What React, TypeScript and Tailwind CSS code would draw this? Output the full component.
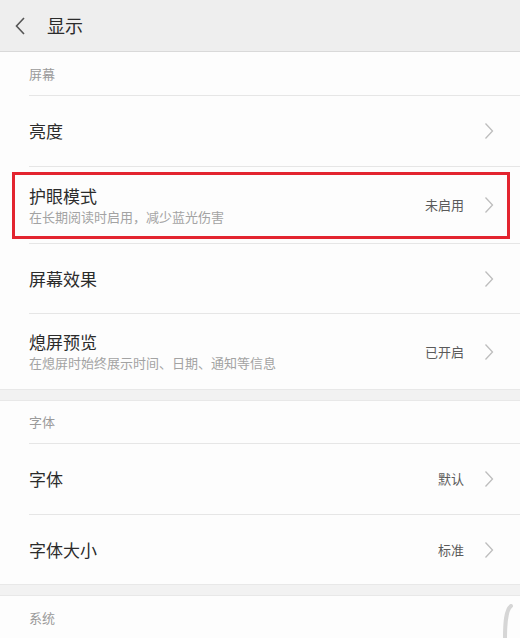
import { ReactNode } from "react";

const FONT = { fontFamily: '"Noto Sans CJK SC", "Noto Sans", sans-serif' };

function Chevron() {
  return (
    <svg width="10" height="18" viewBox="0 0 10 18" className="shrink-0">
      <path d="M1.5 1.5 L8.5 9 L1.5 16.5" fill="none" stroke="#bdbdbd" strokeWidth="1.3" />
    </svg>
  );
}

function SectionLabel({ children, first }: { children: ReactNode; first?: boolean }) {
  return (
    <div className={`flex items-center pl-[29px] ${first ? "h-[45px]" : "h-[44px]"}`}>
      <span className="text-[13px] text-[#9a9a9a]">{children}</span>
    </div>
  );
}

function Row({
  title,
  sub,
  value,
  h,
  last,
  highlight,
}: {
  title: string;
  sub?: string;
  value?: string;
  h: string;
  last?: boolean;
  highlight?: boolean;
}) {
  return (
    <div className="relative pl-[29px]">
      <div className={`flex items-center pr-[26px] ${h} ${last ? "" : "border-b border-[#e6e6e6]"}`}>
        <div className="flex-1 flex flex-col">
          <span className="text-[17px] leading-[22px] text-[#2b2b2b]">{title}</span>
          {sub && <span className="text-[13px] leading-[18px] mt-[1px] text-[#a3a3a3]">{sub}</span>}
        </div>
        {value && <span className="text-[13px] text-[#5a5a5a] mr-[20px]">{value}</span>}
        <Chevron />
      </div>
      {highlight && (
        <div className="absolute top-[5px] bottom-[5px] left-[12px] right-[10px] border-[3px] border-[#e3242f]" />
      )}
    </div>
  );
}

export default function App() {
  return (
    <div className="relative w-[520px] h-[638px] overflow-hidden bg-[#f2f2f2]" style={FONT}>
      {/* header */}
      <div className="h-[52px] flex items-center bg-[#eeeeee] border-b border-[#d9d9d9]">
        <svg width="12" height="20" viewBox="0 0 12 20" className="ml-[14px]">
          <path d="M10 2 L2.5 10 L10 18" fill="none" stroke="#555" strokeWidth="1.6" />
        </svg>
        <span className="ml-[21px] text-[18px] text-[#2b2b2b]">显示</span>
      </div>

      <div className="bg-[#fdfdfd] border-b border-[#e8e8e8]">
        <div className="pl-[29px]">
          <div className="h-[44px] flex items-center border-b border-[#e6e6e6]">
            <span className="text-[13px] text-[#9a9a9a]">屏幕</span>
          </div>
        </div>
        <Row title="亮度" h="h-[71px]" />
        <Row title="护眼模式" sub="在长期阅读时启用，减少蓝光伤害" value="未启用" h="h-[77px]" highlight />
        <Row title="屏幕效果" h="h-[70px]" />
        <Row title="熄屏预览" sub="在熄屏时始终展示时间、日期、通知等信息" value="已开启" h="h-[75px]" last />
      </div>

      <div className="h-[10px]" />

      <div className="bg-[#fdfdfd] border-y border-[#e8e8e8]">
        <div className="pl-[29px]">
          <div className="h-[43px] flex items-center border-b border-[#e6e6e6]">
            <span className="text-[13px] text-[#9a9a9a]">字体</span>
          </div>
        </div>
        <Row title="字体" value="默认" h="h-[71px]" />
        <Row title="字体大小" value="标准" h="h-[69px]" last />
      </div>

      <div className="h-[10px]" />

      <div className="bg-[#fdfdfd] border-t border-[#e8e8e8] h-[60px]">
        <SectionLabel>系统</SectionLabel>
      </div>

      {/* scroll edge artifact */}
      <svg width="14" height="34" viewBox="0 0 14 34" className="absolute right-[6px] bottom-0">
        <path d="M11 2 C6 6 5 18 5 34" fill="none" stroke="#d6d6d6" strokeWidth="4" strokeLinecap="round" />
      </svg>
    </div>
  );
}
